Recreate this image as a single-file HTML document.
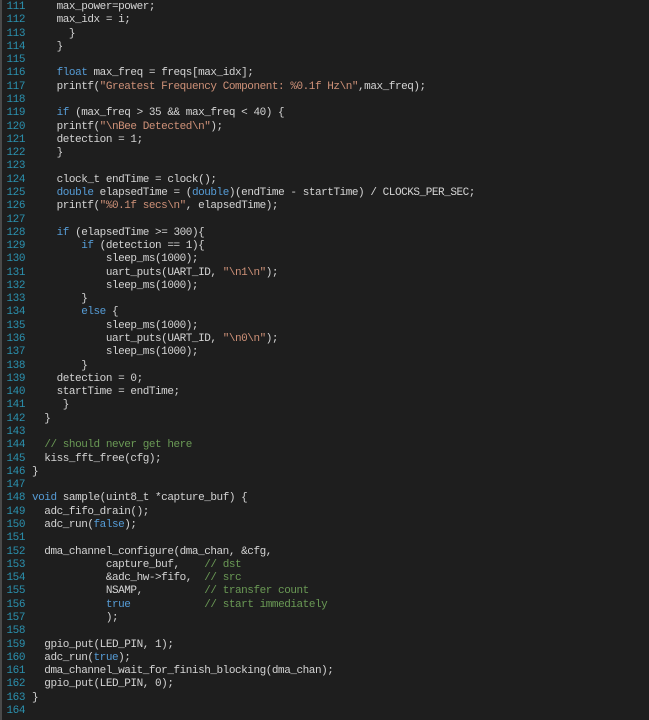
<!DOCTYPE html>
<html><head><meta charset="utf-8"><style>
html,body{margin:0;padding:0;background:#1e1e1e;width:649px;height:720px;overflow:hidden}
.bl{position:absolute;left:0;top:0;width:2px;height:720px;background:#4a4a4a}
pre{margin:0;position:absolute;top:1px;font-family:"Liberation Mono",monospace;font-size:11px;letter-spacing:-0.45px;line-height:13.28px;color:#d4d4d4}
#n{left:5px;color:#2b91af;text-align:right;width:20px}
#c{left:32px}
.k{color:#569cd6}.s{color:#ce9178}.c{color:#6a9955}
</style></head><body><div class="bl"></div>
<pre id="n">111
112
113
114
115
116
117
118
119
120
121
122
123
124
125
126
127
128
129
130
131
132
133
134
135
136
137
138
139
140
141
142
143
144
145
146
147
148
149
150
151
152
153
154
155
156
157
158
159
160
161
162
163
164</pre>
<pre id="c">    max_power=power;
    max_idx = i;
      }
    }

    <span class="k">float</span> max_freq = freqs[max_idx];
    printf(<span class="s">"Greatest Frequency Component: %0.1f Hz\n"</span>,max_freq);

    <span class="k">if</span> (max_freq &gt; 35 &amp;&amp; max_freq &lt; 40) {
    printf(<span class="s">"\nBee Detected\n"</span>);
    detection = 1;
    }

    clock_t endTime = clock();
    <span class="k">double</span> elapsedTime = (<span class="k">double</span>)(endTime - startTime) / CLOCKS_PER_SEC;
    printf(<span class="s">"%0.1f secs\n"</span>, elapsedTime);

    <span class="k">if</span> (elapsedTime &gt;= 300){
        <span class="k">if</span> (detection == 1){
            sleep_ms(1000);
            uart_puts(UART_ID, <span class="s">"\n1\n"</span>);
            sleep_ms(1000);
        }
        <span class="k">else</span> {
            sleep_ms(1000);
            uart_puts(UART_ID, <span class="s">"\n0\n"</span>);
            sleep_ms(1000);
        }
    detection = 0;
    startTime = endTime;
     }
  }

  <span class="c">// should never get here</span>
  kiss_fft_free(cfg);
}

<span class="k">void</span> sample(uint8_t *capture_buf) {
  adc_fifo_drain();
  adc_run(<span class="k">false</span>);

  dma_channel_configure(dma_chan, &amp;cfg,
            capture_buf,    <span class="c">// dst</span>
            &amp;adc_hw-&gt;fifo,  <span class="c">// src</span>
            NSAMP,          <span class="c">// transfer count</span>
            <span class="k">true</span>            <span class="c">// start immediately</span>
            );

  gpio_put(LED_PIN, 1);
  adc_run(<span class="k">true</span>);
  dma_channel_wait_for_finish_blocking(dma_chan);
  gpio_put(LED_PIN, 0);
}
</pre>
</body></html>
